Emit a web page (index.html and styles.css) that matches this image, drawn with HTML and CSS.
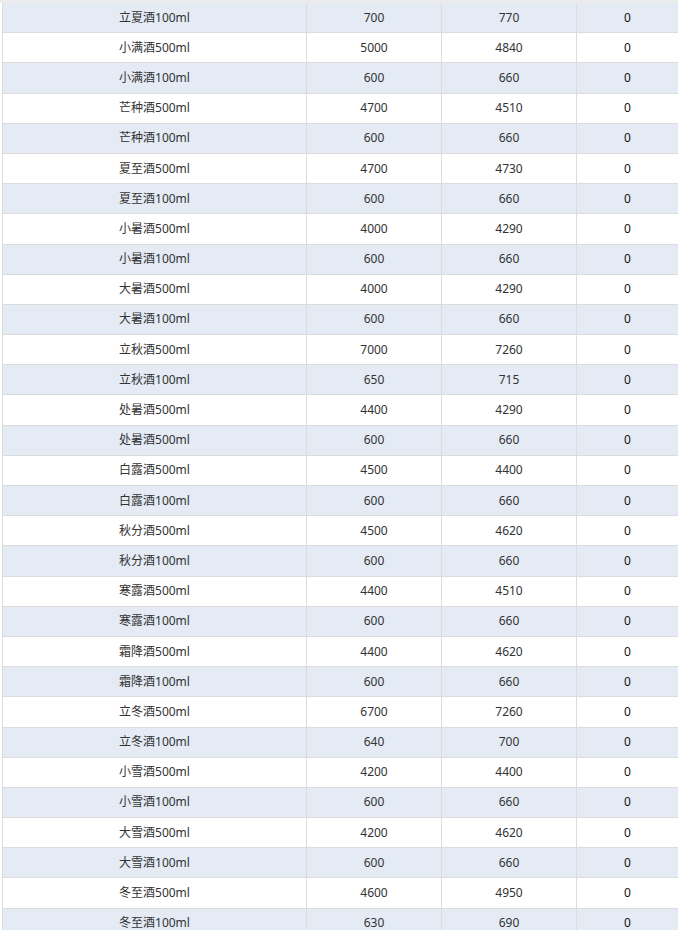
FILE: index.html
```html
<!DOCTYPE html>
<html lang="zh-CN">
<head>
<meta charset="utf-8">
<title>酒品价格表</title>
<link rel="stylesheet" href="styles.css">
</head>
<body>
<div class="topbar"></div>
<div class="table-wrap">
  <div class="table">
    <div class="row stripe"><div class="cell">立夏酒100ml</div><div class="cell">700</div><div class="cell">770</div><div class="cell last">0</div></div>
    <div class="row"><div class="cell">小满酒500ml</div><div class="cell">5000</div><div class="cell">4840</div><div class="cell last">0</div></div>
    <div class="row stripe"><div class="cell">小满酒100ml</div><div class="cell">600</div><div class="cell">660</div><div class="cell last">0</div></div>
    <div class="row"><div class="cell">芒种酒500ml</div><div class="cell">4700</div><div class="cell">4510</div><div class="cell last">0</div></div>
    <div class="row stripe"><div class="cell">芒种酒100ml</div><div class="cell">600</div><div class="cell">660</div><div class="cell last">0</div></div>
    <div class="row"><div class="cell">夏至酒500ml</div><div class="cell">4700</div><div class="cell">4730</div><div class="cell last">0</div></div>
    <div class="row stripe"><div class="cell">夏至酒100ml</div><div class="cell">600</div><div class="cell">660</div><div class="cell last">0</div></div>
    <div class="row"><div class="cell">小暑酒500ml</div><div class="cell">4000</div><div class="cell">4290</div><div class="cell last">0</div></div>
    <div class="row stripe"><div class="cell">小暑酒100ml</div><div class="cell">600</div><div class="cell">660</div><div class="cell last">0</div></div>
    <div class="row"><div class="cell">大暑酒500ml</div><div class="cell">4000</div><div class="cell">4290</div><div class="cell last">0</div></div>
    <div class="row stripe"><div class="cell">大暑酒100ml</div><div class="cell">600</div><div class="cell">660</div><div class="cell last">0</div></div>
    <div class="row"><div class="cell">立秋酒500ml</div><div class="cell">7000</div><div class="cell">7260</div><div class="cell last">0</div></div>
    <div class="row stripe"><div class="cell">立秋酒100ml</div><div class="cell">650</div><div class="cell">715</div><div class="cell last">0</div></div>
    <div class="row"><div class="cell">处暑酒500ml</div><div class="cell">4400</div><div class="cell">4290</div><div class="cell last">0</div></div>
    <div class="row stripe"><div class="cell">处暑酒500ml</div><div class="cell">600</div><div class="cell">660</div><div class="cell last">0</div></div>
    <div class="row"><div class="cell">白露酒500ml</div><div class="cell">4500</div><div class="cell">4400</div><div class="cell last">0</div></div>
    <div class="row stripe"><div class="cell">白露酒100ml</div><div class="cell">600</div><div class="cell">660</div><div class="cell last">0</div></div>
    <div class="row"><div class="cell">秋分酒500ml</div><div class="cell">4500</div><div class="cell">4620</div><div class="cell last">0</div></div>
    <div class="row stripe"><div class="cell">秋分酒100ml</div><div class="cell">600</div><div class="cell">660</div><div class="cell last">0</div></div>
    <div class="row"><div class="cell">寒露酒500ml</div><div class="cell">4400</div><div class="cell">4510</div><div class="cell last">0</div></div>
    <div class="row stripe"><div class="cell">寒露酒100ml</div><div class="cell">600</div><div class="cell">660</div><div class="cell last">0</div></div>
    <div class="row"><div class="cell">霜降酒500ml</div><div class="cell">4400</div><div class="cell">4620</div><div class="cell last">0</div></div>
    <div class="row stripe"><div class="cell">霜降酒100ml</div><div class="cell">600</div><div class="cell">660</div><div class="cell last">0</div></div>
    <div class="row"><div class="cell">立冬酒500ml</div><div class="cell">6700</div><div class="cell">7260</div><div class="cell last">0</div></div>
    <div class="row stripe"><div class="cell">立冬酒100ml</div><div class="cell">640</div><div class="cell">700</div><div class="cell last">0</div></div>
    <div class="row"><div class="cell">小雪酒500ml</div><div class="cell">4200</div><div class="cell">4400</div><div class="cell last">0</div></div>
    <div class="row stripe"><div class="cell">小雪酒100ml</div><div class="cell">600</div><div class="cell">660</div><div class="cell last">0</div></div>
    <div class="row"><div class="cell">大雪酒500ml</div><div class="cell">4200</div><div class="cell">4620</div><div class="cell last">0</div></div>
    <div class="row stripe"><div class="cell">大雪酒100ml</div><div class="cell">600</div><div class="cell">660</div><div class="cell last">0</div></div>
    <div class="row"><div class="cell">冬至酒500ml</div><div class="cell">4600</div><div class="cell">4950</div><div class="cell last">0</div></div>
    <div class="row stripe"><div class="cell">冬至酒100ml</div><div class="cell">630</div><div class="cell">690</div><div class="cell last">0</div></div>
  </div>
</div>
</body>
</html>
```

FILE: styles.css
```css
* {
  box-sizing: border-box;
}

html, body {
  margin: 0;
  padding: 0;
  background: #ffffff;
}

body {
  width: 678px;
  height: 936px;
  overflow: hidden;
  font-family: "Noto Sans", "Noto Sans CJK SC", sans-serif;
  font-size: 12px;
  color: #333333;
}

.topbar {
  height: 3px;
  background: #ececec;
}

.table-wrap {
  margin-left: 2px;
  height: 927px;
  overflow: hidden;
}

.table {
  border-left: 1px solid #dcdcdc;
  width: 676px;
}

.row {
  display: grid;
  grid-template-columns: 304px 135px 135px 101px;
  height: 30.2px;
  border-bottom: 1px solid #dcdcdc;
  background: #ffffff;
}

.row.stripe {
  background: #e5ebf5;
}

.cell {
  display: flex;
  align-items: center;
  justify-content: center;
  border-right: 1px solid #dcdcdc;
  white-space: nowrap;
  line-height: 1;
}

.cell.last {
  border-right: none;
  color: #111111;
}
```
